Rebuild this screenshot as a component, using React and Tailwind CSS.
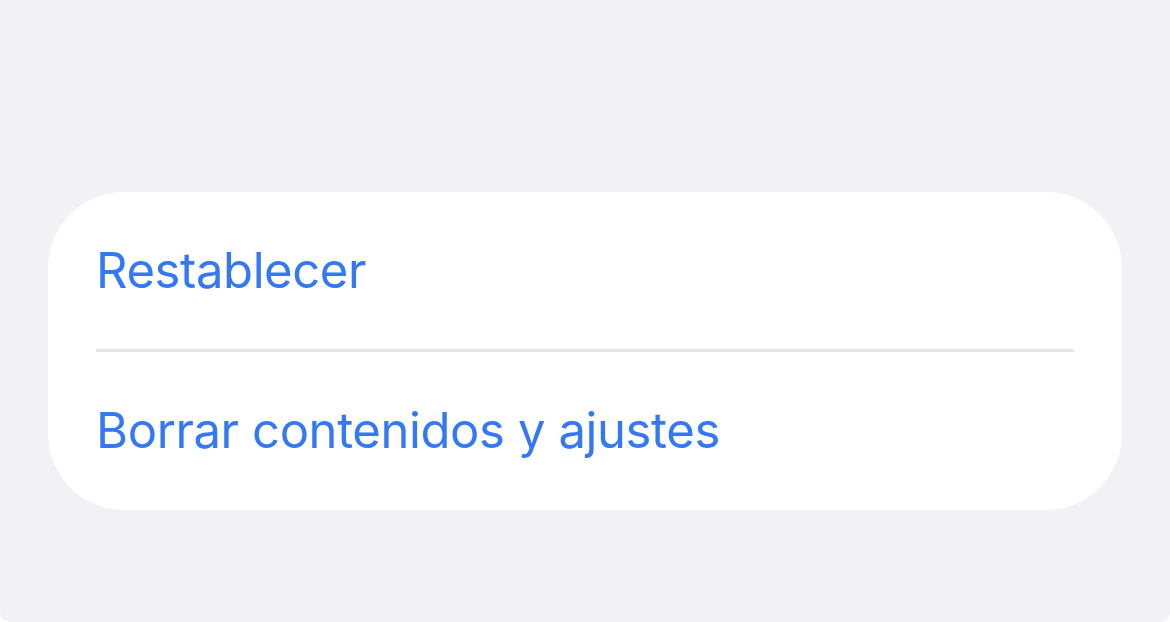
export default function App() {
  return (
    <div className="h-[622px] w-full bg-white">
      <div
        className="h-full w-full bg-[#f1f1f6] rounded-b-[10px] pt-[192px] px-[48px]"
        style={{ fontFamily: 'Inter, "Noto Sans", sans-serif' }}
      >
        <div className="bg-white rounded-[76px] overflow-hidden">
          <button className="flex items-center w-full h-[157px] px-[48px] text-left text-[#3478f6] text-[49px] tracking-[-0.4px]">
            Restablecer
          </button>
          <div className="mx-[48px] h-[3px] bg-[#e6e6ea]" />
          <button className="flex items-center w-full h-[158px] px-[48px] text-left text-[#3478f6] text-[49px] tracking-[-0.4px]">
            Borrar contenidos y ajustes
          </button>
        </div>
      </div>
    </div>
  )
}
